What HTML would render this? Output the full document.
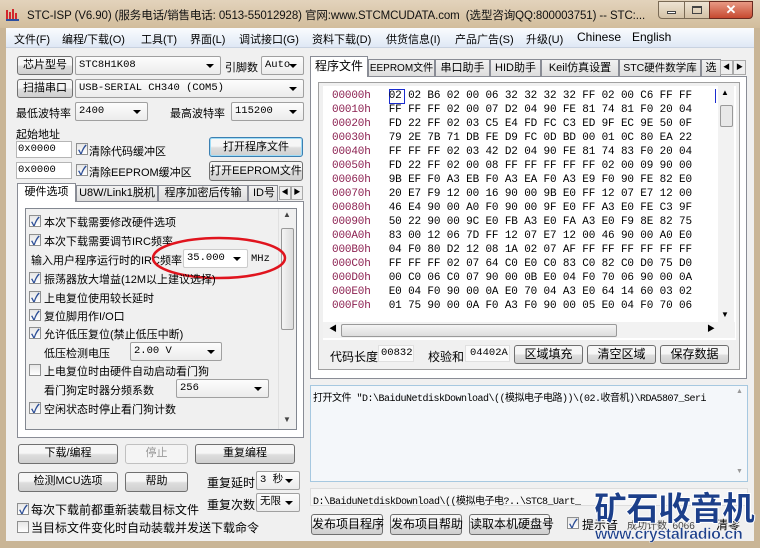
<!DOCTYPE html>
<html><head><meta charset="utf-8"><style>
*{box-sizing:border-box;margin:0;padding:0}
body{width:760px;height:548px;overflow:hidden;background:#c9b596;font-family:"Liberation Sans","Noto Sans CJK SC",sans-serif;font-size:11px;color:#000;position:relative}
.a{position:absolute;white-space:nowrap}
.title{left:0;top:0;width:760px;height:28px;background:linear-gradient(#e3d3bc,#d2bd9c)}
.menu{left:6px;top:28px;width:748px;height:20px;background:linear-gradient(#fafcfe,#dfe8f5);border-bottom:1px solid #c8d2e0}
.main{left:6px;top:48px;width:748px;height:493px;background:#f0f0f0}
.btn{position:absolute;border:1px solid #707070;border-radius:3px;background:linear-gradient(#f6f6f6 45%,#dddddd 55%,#cfcfcf);text-align:center;font-size:11px;line-height:17px;white-space:nowrap}
.sel{position:absolute;border:1px solid #a0a0a0;border-radius:2px;background:linear-gradient(#fdfdfd,#ececec);font-family:"Liberation Mono","Noto Sans CJK SC",monospace;font-size:10.5px;line-height:16px;padding-left:3px;white-space:nowrap;overflow:hidden}
.sel:after{content:"";position:absolute;right:6px;top:7px;border:4px solid transparent;border-top:4px solid #000;border-bottom:0}
.wsel{background:#fff}
.inp{position:absolute;border:1px solid #b5b5b5;background:#fff;font-family:"Liberation Mono",monospace;font-size:10.5px;line-height:14px;padding-left:1px}
.cb{position:absolute;width:12px;height:12px;border:1px solid #8e8f8f;background:linear-gradient(#e6e6e6,#fff)}
.cb.on:after{content:"✓";position:absolute;left:1px;top:-3px;font-size:12px;color:#2c4e96;font-weight:bold}
.tab{position:absolute;border:1px solid #898c95;border-bottom:none;background:linear-gradient(#f2f2f2,#dcdcdc);text-align:center;line-height:17px;font-size:11px;white-space:nowrap;overflow:hidden}
.tab.s{background:#fff;z-index:2}
.m{font-family:"Liberation Mono","Noto Sans CJK SC",monospace;font-size:10.5px}
.hex{position:absolute;left:332px;font-family:"Liberation Mono",monospace;font-size:11px;line-height:14px;white-space:pre;letter-spacing:-0.15px}
.hex b{font-weight:normal;color:#8c2050;margin-right:18px}
.li{position:absolute;left:30px;white-space:nowrap;font-size:11px}
</style></head><body>
<div class="a title"></div>
<div class="a" style="left:5px;top:6px;width:15px;height:15px">
<svg width="15" height="15"><path d="M2 13V4M5 13V6M8 13V3M11 13V7" stroke="#d2262c" stroke-width="2"/><path d="M1 14h13" stroke="#2a4ea0" stroke-width="2"/></svg></div>
<div class="a" style="left:27px;top:7px;font-size:11.5px;color:#111;letter-spacing:-0.1px">STC-ISP (V6.90) (服务电话/销售电话: 0513-55012928) 官网:www.STCMCUDATA.com &nbsp;(选型咨询QQ:800003751) -- STC:...</div>
<div class="a" style="left:658px;top:1px;width:27px;height:18px;border:1px solid #7a6a55;border-radius:0 0 0 4px;background:linear-gradient(#eee3d3,#d4c2a6)"><div style="position:absolute;left:8px;top:9px;width:9px;height:3px;border:1px solid #444;background:#fff"></div></div>
<div class="a" style="left:684px;top:1px;width:26px;height:18px;border:1px solid #7a6a55;background:linear-gradient(#eee3d3,#d4c2a6)"><div style="position:absolute;left:7px;top:4px;width:10px;height:8px;border:1px solid #444;border-top-width:2px"></div></div>
<div class="a" style="left:709px;top:1px;width:44px;height:18px;border:1px solid #6a2a20;border-radius:0 0 4px 0;background:linear-gradient(#e89a84,#c64a30);color:#fff;text-align:center;font-weight:bold;font-size:13px;line-height:16px">✕</div>
<div class="a menu"></div>
<div class="a" style="left:14px;top:31px">文件(F)</div>
<div class="a" style="left:62px;top:31px">编程/下载(O)</div>
<div class="a" style="left:141px;top:31px">工具(T)</div>
<div class="a" style="left:190px;top:31px">界面(L)</div>
<div class="a" style="left:239px;top:31px">调试接口(G)</div>
<div class="a" style="left:312px;top:31px">资料下载(D)</div>
<div class="a" style="left:386px;top:31px">供货信息(I)</div>
<div class="a" style="left:455px;top:31px">产品广告(S)</div>
<div class="a" style="left:526px;top:31px">升级(U)</div>
<div class="a" style="left:577px;top:30px;font-size:12px">Chinese</div>
<div class="a" style="left:632px;top:30px;font-size:12px">English</div>
<div class="a main"></div>

<!-- left -->
<div class="btn" style="left:17px;top:56px;width:56px;height:19px">芯片型号</div>
<div class="sel" style="left:75px;top:56px;width:146px;height:19px">STC8H1K08</div>
<div class="a" style="left:225px;top:59px">引脚数</div>
<div class="sel" style="left:261px;top:56px;width:43px;height:19px">Auto</div>
<div class="btn" style="left:17px;top:79px;width:56px;height:19px">扫描串口</div>
<div class="sel" style="left:75px;top:79px;width:229px;height:19px">USB-SERIAL CH340 (COM5)</div>
<div class="a" style="left:16px;top:105px">最低波特率</div>
<div class="sel" style="left:75px;top:102px;width:73px;height:19px">2400</div>
<div class="a" style="left:170px;top:105px">最高波特率</div>
<div class="sel" style="left:231px;top:102px;width:73px;height:19px">115200</div>
<div class="a" style="left:16px;top:126px">起始地址</div>
<div class="inp" style="left:16px;top:141px;width:56px;height:17px">0x0000</div>
<div class="cb on" style="left:76px;top:143px"></div>
<div class="a" style="left:89px;top:143px">清除代码缓冲区</div>
<div class="btn" style="left:209px;top:137px;width:94px;height:20px;border-color:#3c7fb1;box-shadow:inset 0 0 0 1px #9fdcf6;line-height:18px">打开程序文件</div>
<div class="inp" style="left:16px;top:162px;width:56px;height:17px">0x0000</div>
<div class="cb on" style="left:76px;top:164px"></div>
<div class="a" style="left:89px;top:164px">清除EEPROM缓冲区</div>
<div class="btn" style="left:209px;top:161px;width:94px;height:20px;line-height:18px">打开EEPROM文件</div>
<div class="tab s" style="left:17px;top:183px;width:59px;height:19px">硬件选项</div>
<div class="tab" style="left:76px;top:185px;width:82px;height:16px;line-height:15px">U8W/Link1脱机</div>
<div class="tab" style="left:158px;top:185px;width:90px;height:16px;line-height:15px">程序加密后传输</div>
<div class="tab" style="left:248px;top:185px;width:30px;height:16px;line-height:15px;text-align:left;padding-left:4px">ID号</div>
<div class="a" style="left:279px;top:186px;width:12px;height:14px;border:1px solid #aaa;background:#eee;font-size:7px;text-align:center;line-height:12px">◀</div>
<div class="a" style="left:291px;top:186px;width:12px;height:14px;border:1px solid #aaa;background:#eee;font-size:7px;text-align:center;line-height:12px">▶</div>
<div class="a" style="left:17px;top:201px;width:287px;height:237px;border:1px solid #898c95;background:#fff"></div>
<div class="a" style="left:25px;top:208px;width:272px;height:222px;border:1px solid #828790;background:#f0f0f0"></div>
<div class="a" style="left:278px;top:209px;width:18px;height:220px;background:#f0f0f0;border-left:1px solid #e0e0e0"></div>
<div class="a" style="left:281px;top:228px;width:13px;height:102px;border:1px solid #999;border-radius:2px;background:linear-gradient(90deg,#f4f4f4,#ddd)"></div>
<div class="a" style="left:283px;top:210px;font-size:8px;color:#444">▲</div>
<div class="a" style="left:283px;top:415px;font-size:8px;color:#444">▼</div>
<div class="cb on" style="left:29px;top:215px"></div><div class="li" style="left:44px;top:214px">本次下载需要修改硬件选项</div>
<div class="cb on" style="left:29px;top:234px"></div><div class="li" style="left:44px;top:233px">本次下载需要调节IRC频率</div>
<div class="li" style="left:31px;top:252px">输入用户程序运行时的IRC频率</div>
<div class="sel wsel" style="left:183px;top:249px;width:65px;height:19px;border-color:#ccc">35.000</div>
<div class="a m" style="left:251px;top:253px">MHz</div>
<svg class="a" style="left:150px;top:233px" width="140" height="50"><ellipse cx="69" cy="25" rx="66" ry="20" fill="none" stroke="#e0141e" stroke-width="2.5"/></svg>
<div class="cb on" style="left:29px;top:272px"></div><div class="li" style="left:44px;top:271px">振荡器放大增益(12M以上建议选择)</div>
<div class="cb on" style="left:29px;top:291px"></div><div class="li" style="left:44px;top:290px">上电复位使用较长延时</div>
<div class="cb on" style="left:29px;top:309px"></div><div class="li" style="left:44px;top:308px">复位脚用作I/O口</div>
<div class="cb on" style="left:29px;top:327px"></div><div class="li" style="left:44px;top:326px">允许低压复位(禁止低压中断)</div>
<div class="li" style="left:44px;top:345px">低压检测电压</div>
<div class="sel" style="left:130px;top:342px;width:92px;height:19px">2.00 V</div>
<div class="cb" style="left:29px;top:364px"></div><div class="li" style="left:44px;top:363px">上电复位时由硬件自动启动看门狗</div>
<div class="li" style="left:44px;top:382px">看门狗定时器分频系数</div>
<div class="sel" style="left:176px;top:379px;width:93px;height:19px">256</div>
<div class="cb on" style="left:29px;top:402px"></div><div class="li" style="left:44px;top:401px">空闲状态时停止看门狗计数</div>

<div class="btn" style="left:18px;top:444px;width:100px;height:20px">下载/编程</div>
<div class="btn" style="left:125px;top:444px;width:63px;height:20px;color:#999;border-color:#c0c0c0;background:#f4f4f4">停止</div>
<div class="btn" style="left:195px;top:444px;width:100px;height:20px">重复编程</div>
<div class="btn" style="left:18px;top:472px;width:100px;height:20px">检测MCU选项</div>
<div class="btn" style="left:125px;top:472px;width:63px;height:20px">帮助</div>
<div class="a" style="left:207px;top:474px;font-size:12px">重复延时</div>
<div class="sel" style="left:256px;top:471px;width:44px;height:19px">3 秒</div>
<div class="a" style="left:207px;top:496px;font-size:12px">重复次数</div>
<div class="sel" style="left:256px;top:493px;width:44px;height:19px">无限</div>
<div class="cb on" style="left:17px;top:503px"></div><div class="a" style="left:31px;top:501px;font-size:12px">每次下载前都重新装载目标文件</div>
<div class="cb" style="left:17px;top:521px"></div><div class="a" style="left:31px;top:519px;font-size:12px">当目标文件变化时自动装载并发送下载命令</div>

<!-- right -->
<div class="tab s" style="left:310px;top:56px;width:58px;height:21px;line-height:19px;font-size:12px">程序文件</div>
<div class="tab" style="left:368px;top:59px;width:67px;height:18px;font-size:10px">EEPROM文件</div>
<div class="tab" style="left:435px;top:59px;width:55px;height:18px">串口助手</div>
<div class="tab" style="left:490px;top:59px;width:51px;height:18px">HID助手</div>
<div class="tab" style="left:541px;top:59px;width:78px;height:18px">Keil仿真设置</div>
<div class="tab" style="left:619px;top:59px;width:82px;height:18px;font-size:10.5px">STC硬件数学库</div>
<div class="tab" style="left:701px;top:59px;width:20px;height:18px">选</div>
<div class="a" style="left:720px;top:60px;width:13px;height:15px;border:1px solid #aaa;background:#eee;font-size:7px;text-align:center;line-height:13px">◀</div>
<div class="a" style="left:733px;top:60px;width:13px;height:15px;border:1px solid #aaa;background:#eee;font-size:7px;text-align:center;line-height:13px">▶</div>
<div class="a" style="left:310px;top:76px;width:437px;height:303px;border:1px solid #898c95;background:#fff"></div>
<div class="a" style="left:318px;top:82px;width:422px;height:288px;border:1px solid #a0a0a0;background:#f0f0f0"></div>
<div class="a" style="left:323px;top:86px;width:413px;height:254px;background:#fff"></div>
<div class="a" style="left:718px;top:86px;width:16px;height:236px;background:#f2f2f2"></div>
<div class="a" style="left:720px;top:105px;width:13px;height:22px;border:1px solid #999;border-radius:2px;background:#e8e8e8"></div>
<div class="a" style="left:721px;top:88px;font-size:8px">▲</div>
<div class="a" style="left:721px;top:310px;font-size:8px">▼</div>
<div class="a" style="left:323px;top:322px;width:412px;height:16px;background:#f2f2f2"></div>
<div class="a" style="left:341px;top:324px;width:276px;height:13px;border:1px solid #999;border-radius:2px;background:linear-gradient(#f4f4f4,#dcdcdc)"></div>
<div class="a" style="left:329px;top:323px;font-size:8px">◀</div>
<div class="a" style="left:707px;top:323px;font-size:8px">▶</div>
<div class="a" style="left:389px;top:89px;width:16px;height:15px;border:1px solid #1a2cd0"></div>
<div class="a" style="left:715px;top:89px;width:1px;height:14px;background:#1a2cd0"></div>
<div class="hex" style="top:89px"><b>00000h</b>02 02 B6 02 00 06 32 32 32 32 FF 02 00 C6 FF FF
<b>00010h</b>FF FF FF 02 00 07 D2 04 90 FE 81 74 81 F0 20 04
<b>00020h</b>FD 22 FF 02 03 C5 E4 FD FC C3 ED 9F EC 9E 50 0F
<b>00030h</b>79 2E 7B 71 DB FE D9 FC 0D BD 00 01 0C 80 EA 22
<b>00040h</b>FF FF FF 02 03 42 D2 04 90 FE 81 74 83 F0 20 04
<b>00050h</b>FD 22 FF 02 00 08 FF FF FF FF FF 02 00 09 90 00
<b>00060h</b>9B EF F0 A3 EB F0 A3 EA F0 A3 E9 F0 90 FE 82 E0
<b>00070h</b>20 E7 F9 12 00 16 90 00 9B E0 FF 12 07 E7 12 00
<b>00080h</b>46 E4 90 00 A0 F0 90 00 9F E0 FF A3 E0 FE C3 9F
<b>00090h</b>50 22 90 00 9C E0 FB A3 E0 FA A3 E0 F9 8E 82 75
<b>000A0h</b>83 00 12 06 7D FF 12 07 E7 12 00 46 90 00 A0 E0
<b>000B0h</b>04 F0 80 D2 12 08 1A 02 07 AF FF FF FF FF FF FF
<b>000C0h</b>FF FF FF 02 07 64 C0 E0 C0 83 C0 82 C0 D0 75 D0
<b>000D0h</b>00 C0 06 C0 07 90 00 0B E0 04 F0 70 06 90 00 0A
<b>000E0h</b>E0 04 F0 90 00 0A E0 70 04 A3 E0 64 14 60 03 02
<b>000F0h</b>01 75 90 00 0A F0 A3 F0 90 00 05 E0 04 F0 70 06</div>
<div class="a" style="left:330px;top:348px;font-size:12px">代码长度</div>
<div class="a m" style="left:378px;top:345px;width:36px;height:17px;border:1px solid #e0e0e0;background:#fafafa;padding:1px 2px">00832</div>
<div class="a" style="left:428px;top:348px;font-size:12px">校验和</div>
<div class="a m" style="left:465px;top:345px;width:45px;height:17px;border:1px solid #e0e0e0;background:#fafafa;padding:1px 4px">04402A</div>
<div class="btn" style="left:514px;top:345px;width:69px;height:19px;font-size:12px">区域填充</div>
<div class="btn" style="left:587px;top:345px;width:69px;height:19px;font-size:12px">清空区域</div>
<div class="btn" style="left:660px;top:345px;width:69px;height:19px;font-size:12px">保存数据</div>
<div class="a" style="left:310px;top:385px;width:438px;height:97px;border:1px solid #a6c8e0;background:#f4f7fa"></div>
<div class="a m" style="left:313px;top:389px;font-size:10px;letter-spacing:-0.5px;width:420px;overflow:hidden">打开文件 "D:\BaiduNetdiskDownload\((模拟电子电路))\(02.收音机)\RDA5807_Seri</div>
<div class="a" style="left:736px;top:388px;font-size:7px;color:#999">▲</div>
<div class="a" style="left:736px;top:468px;font-size:7px;color:#999">▼</div>
<div class="a" style="left:310px;top:488px;width:438px;height:18px;border:1px solid #ddd;background:#f6f6f6"></div>
<div class="a m" style="left:313px;top:492px;font-size:10px;letter-spacing:-0.5px">D:\BaiduNetdiskDownload\((模拟电子电?..\STC8_Uart_</div>
<div class="btn" style="left:311px;top:514px;width:72px;height:21px;line-height:19px;font-size:12px">发布项目程序</div>
<div class="btn" style="left:390px;top:514px;width:72px;height:21px;line-height:19px;font-size:12px">发布项目帮助</div>
<div class="btn" style="left:469px;top:514px;width:81px;height:21px;line-height:19px;font-size:12px">读取本机硬盘号</div>
<div class="cb on" style="left:567px;top:517px"></div>
<div class="a" style="left:582px;top:516px;font-size:12px">提示音</div>
<div class="a" style="left:627px;top:517px;font-size:10px;color:#444">成功计数 &nbsp;6066</div>
<div class="a" style="left:716px;top:516px;font-size:12px">清零</div>
<div class="a" style="left:594px;top:484px;font-size:33px;font-weight:900;color:#1c3f8a;font-family:'Noto Sans CJK SC',sans-serif;-webkit-text-stroke:1px #fff;line-height:44px;letter-spacing:-1px">矿石收音机</div>
<div class="a" style="left:595px;top:526px;font-size:16px;font-weight:bold;color:#1c3f8a;font-family:'Liberation Sans',sans-serif;-webkit-text-stroke:0.4px #fff;letter-spacing:-0.4px;line-height:18px">www.crystalradio.cn</div>
</body></html>
